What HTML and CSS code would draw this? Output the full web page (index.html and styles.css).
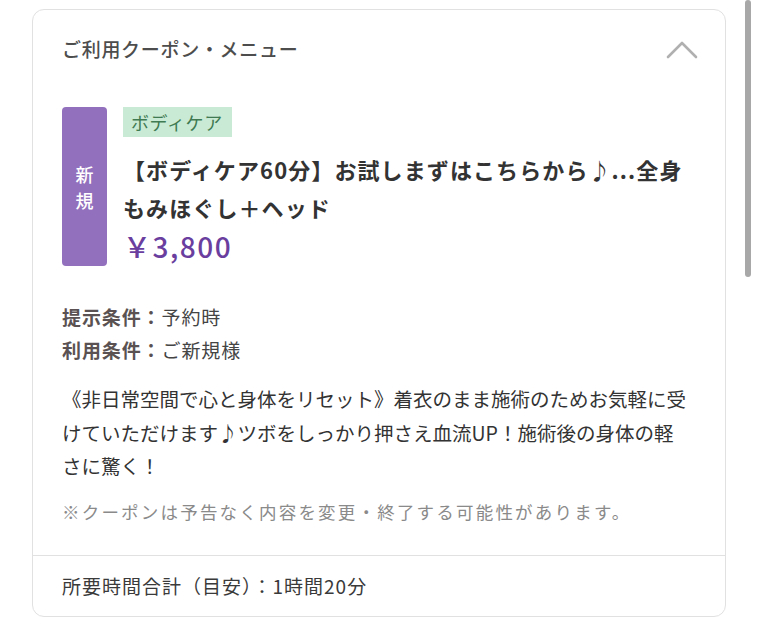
FILE: index.html
```html
<!DOCTYPE html>
<html lang="ja">
<head>
<meta charset="utf-8">
<link rel="stylesheet" href="styles.css">
</head>
<body>
<div class="card">
  <div class="card-head">
    <span class="head-title">ご利用クーポン・メニュー</span>
    <svg class="chevron" width="32" height="18" viewBox="0 0 32 18"><path d="M2 16 L16 2 L30 16" fill="none" stroke="#b0b0b0" stroke-width="2.6" stroke-linecap="round" stroke-linejoin="round"/></svg>
  </div>
  <div class="card-body">
    <div class="coupon">
      <div class="badge"><span>新</span><span>規</span></div>
      <div class="coupon-main">
        <span class="tag">ボディケア</span>
        <div class="title">【ボディケア60分】お試しまずはこちらから♪...全身<br>もみほぐし＋ヘッド</div>
        <div class="price">￥3,800</div>
      </div>
    </div>
    <div class="conds">
      <div class="cond"><span class="cond-label">提示条件：</span><span class="cond-val">予約時</span></div>
      <div class="cond"><span class="cond-label">利用条件：</span><span class="cond-val">ご新規様</span></div>
    </div>
    <p class="desc">《非日常空間で心と身体をリセット》着衣のまま施術のためお気軽に受けていただけます♪ツボをしっかり押さえ血流UP！施術後の身体の軽さに驚く！</p>
    <p class="note">※クーポンは予告なく内容を変更・終了する可能性があります。</p>
  </div>
  <div class="card-foot">所要時間合計（目安）：1時間20分</div>
</div>
<div class="scrollbar"></div>
</body>
</html>
```
FILE: styles.css
```css
* { box-sizing: border-box; }
html, body { margin: 0; padding: 0; background: #fff; }
body {
  font-family: "Noto Sans CJK JP", "Noto Sans", sans-serif;
  color: #333;
  width: 758px;
  height: 630px;
  overflow: hidden;
  padding: 9px 0 0 32px;
}
.card {
  width: 694px;
  border: 1px solid #e1e1e1;
  border-radius: 12px;
  background: #fff;
}
.card-head {
  display: flex;
  justify-content: space-between;
  align-items: center;
  padding: 27px 27px 0 29px;
  box-sizing: content-box;
  height: 24px;
}
.head-title {
  font-size: 19px;
  line-height: 24px;
  color: #4d4d4d;
  font-weight: 500;
  letter-spacing: 0.7px;
}
.chevron { display: block; margin-top: 2px; }
.card-body {
  padding: 46px 29px 29px 29px;
}
.coupon {
  display: flex;
  gap: 16px;
}
.badge {
  width: 45px;
  background: #9270bd;
  border-radius: 4px;
  color: #fff;
  font-size: 18px;
  line-height: 26px;
  display: flex;
  flex-direction: column;
  align-items: center;
  justify-content: center;
  font-weight: 500;
}
.coupon-main {
  display: flex;
  flex-direction: column;
  align-items: flex-start;
}
.tag {
  background: #c9ead5;
  color: #3f7a52;
  font-size: 18px;
  line-height: 30px;
  height: 30px;
  padding: 0 9px 0 8px;
  letter-spacing: 0.6px;
}
.title {
  margin-top: 13px;
  font-size: 22px;
  line-height: 38px;
  font-weight: 700;
  color: #333;
  letter-spacing: 1.1px;
}
.price {
  font-size: 28px;
  line-height: 40px;
  color: #6a3e9e;
  font-weight: 500;
  letter-spacing: 1.5px;
}
.conds {
  margin-top: 34px;
}
.cond {
  font-size: 19px;
  line-height: 33px;
  letter-spacing: 0.9px;
}
.cond-label {
  color: #5a5252;
  font-weight: 700;
}
.cond-val { color: #444; }
.desc {
  margin: 16px 0 0 0;
  max-width: 627px;
  font-size: 19.5px;
  line-height: 33.5px;
  color: #333;
}
.note {
  margin: 15px 0 0 0;
  font-size: 17.5px;
  line-height: 28px;
  color: #8a8a8a;
  letter-spacing: 2.2px;
}
.card-foot {
  border-top: 1px solid #e1e1e1;
  padding: 0 29px;
  height: 61px;
  display: flex;
  align-items: center;
  font-size: 19px;
  color: #3a3a3a;
  letter-spacing: 1px;
}
.scrollbar {
  position: absolute;
  left: 745px;
  top: 0;
  width: 6px;
  height: 277px;
  background: #a8a8a8;
  border-radius: 3px;
}
```
